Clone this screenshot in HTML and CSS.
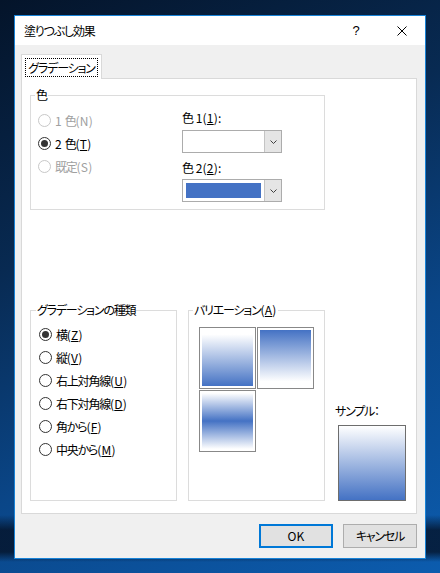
FILE: index.html
```html
<!DOCTYPE html>
<html lang="ja">
<head>
<meta charset="utf-8">
<title>塗りつぶし効果</title>
<link rel="stylesheet" href="styles.css">
</head>
<body>
<div class="window">
  <div class="titlebar">
    <span class="title">塗りつぶし効果</span>
    <span class="tb-btn help">?</span>
    <span class="tb-btn close">
      <svg width="10" height="10" viewBox="0 0 10 10"><path d="M0.5 0.5 L9.5 9.5 M9.5 0.5 L0.5 9.5" stroke="#000" stroke-width="1" fill="none"/></svg>
    </span>
  </div>
  <div class="client">
    <div class="tabs">
      <div class="tab active"><span class="focus">グラデーション</span></div>
    </div>
    <div class="panel">
      <fieldset class="group g-color">
        <legend>色</legend>
        <div class="color-grid">
          <div class="radios">
            <label class="radio disabled"><span class="circle"></span><span><span class="lt">1 </span>色<span class="lt">(N)</span></span></label>
            <label class="radio checked"><span class="circle"></span><span><span class="lt">2 </span>色<span class="lt">(<u>T</u>)</span></span></label>
            <label class="radio disabled"><span class="circle"></span><span>既定<span class="lt">(S)</span></span></label>
          </div>
          <div class="pickers">
            <div class="lbl">色<span class="lt"> 1(<u>1</u>):</span></div>
            <div class="combo">
              <div class="field"></div>
              <div class="drop"><svg width="7" height="4" viewBox="0 0 7 4"><path d="M0.5 0.5 L3.5 3.5 L6.5 0.5" stroke="#404040" stroke-width="1" fill="none"/></svg></div>
            </div>
            <div class="lbl lbl2">色<span class="lt"> 2(<u>2</u>):</span></div>
            <div class="combo combo2">
              <div class="field"><span class="swatch"></span></div>
              <div class="drop"><svg width="7" height="4" viewBox="0 0 7 4"><path d="M0.5 0.5 L3.5 3.5 L6.5 0.5" stroke="#404040" stroke-width="1" fill="none"/></svg></div>
            </div>
          </div>
        </div>
      </fieldset>
      <div class="lower">
        <fieldset class="group g-type">
          <legend>グラデーションの種類</legend>
          <label class="radio checked"><span class="circle"></span><span>横<span class="lt">(<u>Z</u>)</span></span></label>
          <label class="radio"><span class="circle"></span><span>縦<span class="lt">(<u>V</u>)</span></span></label>
          <label class="radio"><span class="circle"></span><span>右上対角線<span class="lt">(<u>U</u>)</span></span></label>
          <label class="radio"><span class="circle"></span><span>右下対角線<span class="lt">(<u>D</u>)</span></span></label>
          <label class="radio"><span class="circle"></span><span>角から<span class="lt">(<u>F</u>)</span></span></label>
          <label class="radio"><span class="circle"></span><span>中央から<span class="lt">(<u>M</u>)</span></span></label>
        </fieldset>
        <fieldset class="group g-var">
          <legend>バリエーション<span class="lt">(<u>A</u>)</span></legend>
          <div class="tiles">
            <div class="tile"><div class="grad down"></div></div>
            <div class="tile"><div class="grad up"></div></div>
            <div class="tile"><div class="grad mid"></div></div>
          </div>
        </fieldset>
        <div class="sample">
          <div class="lbl">サンプル：</div>
          <div class="sample-box"></div>
        </div>
      </div>
    </div>
    <div class="buttons">
      <button class="btn default"><span class="lt">OK</span></button>
      <button class="btn">キャンセル</button>
    </div>
  </div>
</div>
</body>
</html>
```
FILE: styles.css
```css
* { box-sizing: border-box; }

html, body {
  margin: 0;
  padding: 0;
  height: 573px;
  overflow: hidden;
}

body {
  font-family: "Noto Sans CJK JP", "Noto Sans", sans-serif;
  font-size: 12px;
  font-feature-settings: "palt";
  letter-spacing: -1.2px;
  color: #000;
  background:
    linear-gradient(to bottom, rgba(4, 14, 32, 0) 515px, rgba(4, 14, 32, 0.75) 530px, rgba(4, 14, 32, 0.75) 552px, rgba(4, 14, 32, 0) 562px),
    linear-gradient(155deg, #04142a 0%, #082a52 35%, #0a4688 65%, #0c5cae 100%);
  padding-top: 15px;
  padding-left: 14px;
}

.lt {
  letter-spacing: 0.2px;
}

.window {
  width: 412px;
  height: 544px;
  border: 1px solid #1883d7;
  background: #f0f0f0;
  display: flex;
  flex-direction: column;
}

/* title bar */
.titlebar {
  height: 29px;
  background: #fff;
  display: flex;
  align-items: center;
  padding-left: 9px;
}
.title {
  flex: 1;
  font-size: 12px;
  line-height: 16px;
}
.tb-btn {
  width: 46px;
  height: 29px;
  display: flex;
  align-items: center;
  justify-content: center;
}
.help {
  font-family: "Liberation Sans", sans-serif;
  font-size: 13px;
  letter-spacing: 0;
}

/* client area */
.client {
  flex: 1;
  display: flex;
  flex-direction: column;
  padding: 9px 8px 10px 6px;
}

.tabs {
  display: flex;
  height: 24px;
}
.tab {
  width: 81px;
  height: 25px;
  background: #fff;
  border: 1px solid #d9d9d9;
  border-bottom: none;
  position: relative;
  z-index: 1;
  padding: 3px 3px 0 3px;
}
.focus {
  display: flex;
  align-items: center;
  justify-content: center;
  height: 19px;
  white-space: nowrap;
  outline: 1px dotted #000;
  outline-offset: -1px;
  line-height: 16px;
}

.panel {
  height: 436px;
  background: #fff;
  border: 1px solid #d9d9d9;
  padding: 8px 0 0 8px;
}

/* group boxes */
.group {
  margin: 0;
  min-width: 0;
  border: 1px solid #dcdcdc;
  padding: 0;
}
.group legend {
  padding: 0 1px;
  line-height: 16px;
  font-size: 12px;
}

.g-color {
  width: 295px;
  padding: 0 0 7px 7px;
}
.g-color legend { margin-left: -3px; }

.color-grid {
  display: flex;
}
.radios {
  width: 144px;
  padding-top: 6px;
}
.pickers {
  width: 100px;
  padding-top: 7px;
}
.lbl {
  line-height: 16px;
  height: 16px;
  white-space: nowrap;
}
.lbl2 { margin-top: 7px; }

.combo {
  margin-top: 4px;
  height: 23px;
  border: 1px solid #acacac;
  display: flex;
  background: #fff;
}
.combo2 { margin-top: 3px; }
.combo .field {
  flex: 1;
  padding: 3px;
}
.combo .drop {
  width: 17px;
  background: #e5e5e5;
  border-left: 1px solid #c4c4c4;
  display: flex;
  align-items: center;
  justify-content: center;
}
.swatch {
  display: block;
  height: 15px;
  background: #4472c4;
}

/* radio buttons */
.radio {
  display: flex;
  align-items: center;
  height: 23px;
  gap: 4px;
  line-height: 16px;
  white-space: nowrap;
}
.circle {
  width: 13px;
  height: 13px;
  border: 1px solid #333;
  border-radius: 50%;
  background: #fff;
  display: flex;
  align-items: center;
  justify-content: center;
  flex: none;
}
.radio.checked .circle::after {
  content: "";
  width: 7px;
  height: 7px;
  border-radius: 50%;
  background: #333;
}
.radio.disabled { color: #a0a0a0; }
.radio.disabled .circle { border-color: #c8c8c8; }

/* lower row */
.lower {
  display: flex;
  align-items: stretch;
  margin-top: 92px;
}
.g-type {
  width: 147px;
  padding: 5px 0 2px 8px;
}
.g-type legend { margin-left: -3px; }

.g-var {
  width: 137px;
  margin-left: 11px;
  padding: 9px 0 0 10px;
}
.g-var legend { margin-left: -6px; }

.tiles {
  display: grid;
  grid-template-columns: 57px 57px;
  grid-auto-rows: 62px;
  gap: 1px;
}
.tile {
  border: 1px solid #888;
  padding: 2px;
  background: #fff;
}
.grad { height: 100%; }
.grad.down { background: linear-gradient(to bottom, #fff 0%, #fff 8%, #4472c4 100%); }
.grad.up { background: linear-gradient(to bottom, #4472c4 0%, #fff 92%, #fff 100%); }
.grad.mid { background: linear-gradient(to bottom, #fff 0%, #4472c4 50%, #fff 100%); }

.sample {
  margin-left: 10px;
  padding-top: 101px;
}
.sample-box {
  margin-top: 6px;
  margin-left: 3px;
  width: 68px;
  height: 76px;
  border: 1px solid #6d6d6d;
  background: linear-gradient(to bottom, #fff 0%, #4472c4 100%);
}

/* buttons */
.buttons {
  margin-top: 10px;
  display: flex;
  justify-content: flex-end;
  gap: 10px;
}
.btn {
  width: 74px;
  height: 24px;
  font-family: inherit;
  font-size: 12px;
  font-feature-settings: "palt";
  letter-spacing: -1.2px;
  background: #e1e1e1;
  border: 1px solid #adadad;
  padding: 0;
  color: #000;
  line-height: 16px;
}
.btn.default {
  border: 2px solid #0078d7;
}
```
